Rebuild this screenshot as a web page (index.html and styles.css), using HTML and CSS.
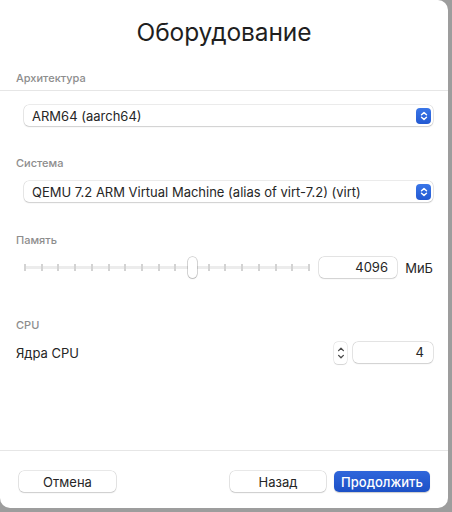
FILE: index.html
```html
<!DOCTYPE html>
<html lang="ru">
<head>
<meta charset="utf-8">
<title>Оборудование</title>
<link rel="stylesheet" href="styles.css">
</head>
<body>
<div class="sheet">
  <h1 class="title">Оборудование</h1>

  <div class="label label-arch">Архитектура</div>
  <div class="rule"></div>
  <div class="popup popup-arch">
    <span class="popup-text">ARM64 (aarch64)</span>
    <span class="popup-btn">
      <svg width="8" height="10" viewBox="0 0 8 10"><path d="M1.5 3.8 L4 1.6 L6.5 3.8 M1.5 6.2 L4 8.4 L6.5 6.2" fill="none" stroke="#fff" stroke-width="1.4" stroke-linecap="round" stroke-linejoin="round"/></svg>
    </span>
  </div>

  <div class="label label-sys">Система</div>
  <div class="popup popup-sys">
    <span class="popup-text">QEMU 7.2 ARM Virtual Machine (alias of virt-7.2) (virt)</span>
    <span class="popup-btn">
      <svg width="8" height="10" viewBox="0 0 8 10"><path d="M1.5 3.8 L4 1.6 L6.5 3.8 M1.5 6.2 L4 8.4 L6.5 6.2" fill="none" stroke="#fff" stroke-width="1.4" stroke-linecap="round" stroke-linejoin="round"/></svg>
    </span>
  </div>

  <div class="label label-mem">Память</div>
  <div class="mem-row">
    <div class="slider">
      <div class="track"></div>
      <div class="ticks">
        <i></i><i></i><i></i><i></i><i></i><i></i><i></i><i></i><i></i>
        <i></i><i></i><i></i><i></i><i></i><i></i><i></i><i></i><i></i>
      </div>
      <div class="thumb" style="left: 58.8%"></div>
    </div>
    <div class="field field-mem">4096</div>
    <span class="unit">МиБ</span>
  </div>

  <div class="label label-cpu">CPU</div>
  <div class="cpu-row">
    <span class="row-text">Ядра CPU</span>
    <span class="stepper">
      <svg width="8" height="16" viewBox="0 0 8 16"><path d="M1.6 5.6 L4 3.2 L6.4 5.6 M1.6 10.4 L4 12.8 L6.4 10.4" fill="none" stroke="#4a4a4a" stroke-width="1.3" stroke-linecap="round" stroke-linejoin="round"/></svg>
    </span>
    <div class="field field-cpu">4</div>
  </div>

  <div class="spacer"></div>

  <div class="footer">
    <button class="btn">Отмена</button>
    <div class="footer-right">
      <button class="btn">Назад</button>
      <button class="btn btn-primary">Продолжить</button>
    </div>
  </div>
</div>
</body>
</html>
```

FILE: styles.css
```css
* { box-sizing: border-box; }

html, body {
  margin: 0;
  padding: 0;
}

body {
  width: 452px;
  height: 512px;
  background: #9d9d9d;
  font-family: "Inter", "Liberation Sans", sans-serif;
  color: #262626;
  overflow: hidden;
}

.sheet {
  width: 448px;
  height: 508px;
  background: #ffffff;
  border-radius: 0 10px 10px 10px;
  display: flex;
  flex-direction: column;
}

.title {
  margin: 14px 0 0 0;
  height: 36px;
  line-height: 36px;
  font-size: 24.5px;
  font-weight: 400;
  text-align: center;
  color: #1f1f1f;
  letter-spacing: -0.1px;
}

.label {
  height: 14px;
  line-height: 14px;
  font-size: 11px;
  font-weight: 500;
  color: #8d8d8d;
  padding-left: 16px;
}

.label-arch { margin-top: 21px; }
.label-sys { margin-top: 30px; }
.label-mem { margin-top: 31px; }
.label-cpu { margin-top: 40px; }

.rule {
  margin-top: 5px;
  height: 1px;
  background: #e6e6e6;
}

.popup {
  margin-left: 24px;
  margin-right: 15px;
  height: 21px;
  border-radius: 5px;
  background: #fff;
  box-shadow: 0 0 0 0.5px rgba(0,0,0,0.16), 0 1px 1.5px rgba(0,0,0,0.12);
  display: flex;
  align-items: center;
  padding: 0 2px 0 8px;
  font-size: 13px;
}

.popup-arch { margin-top: 14px; }
.popup-sys { margin-top: 11px; }

.popup-text {
  flex: 1;
  white-space: nowrap;
}

.popup-btn {
  width: 15px;
  height: 16px;
  border-radius: 4px;
  background: linear-gradient(#3a76e8, #2359d2);
  display: flex;
  align-items: center;
  justify-content: center;
}

.mem-row {
  margin-top: 10px;
  height: 21px;
  display: flex;
  align-items: center;
  padding: 0 15px 0 24px;
}

.slider {
  position: relative;
  flex: 0 0 286px;
  height: 21px;
  display: flex;
  align-items: center;
}

.track {
  position: absolute;
  left: 0;
  right: 0;
  top: 9px;
  height: 3px;
  border-radius: 2px;
  background: #ececec;
}

.ticks {
  position: relative;
  width: 100%;
  display: flex;
  justify-content: space-between;
}

.ticks i {
  display: block;
  width: 2px;
  height: 7px;
  background: #d3d3d3;
}

.thumb {
  position: absolute;
  top: 0;
  width: 9px;
  height: 21px;
  margin-left: -4px;
  border-radius: 5px;
  background: #fff;
  box-shadow: 0 0 0 0.7px rgba(0,0,0,0.22), 0 1px 1.5px rgba(0,0,0,0.12);
}

.field {
  height: 21px;
  line-height: 21px;
  border-radius: 5px;
  background: #fff;
  box-shadow: 0 0 0 0.5px rgba(0,0,0,0.18), 0 0.5px 1.5px rgba(0,0,0,0.10);
  font-size: 13px;
  text-align: right;
  padding-right: 9px;
}

.field-mem {
  margin-left: 9px;
  width: 78px;
}

.unit {
  margin-left: auto;
  font-size: 13px;
}

.cpu-row {
  margin-top: 10px;
  height: 21px;
  display: flex;
  align-items: center;
  padding: 0 15px 0 16px;
  font-size: 13px;
}

.row-text { flex: 1; }

.stepper {
  width: 13px;
  height: 22px;
  border-radius: 4px;
  background: #fff;
  box-shadow: 0 0 0 0.5px rgba(0,0,0,0.14), 0 0.5px 1px rgba(0,0,0,0.10);
  display: flex;
  align-items: center;
  justify-content: center;
}

.field-cpu {
  margin-left: 6px;
  width: 80px;
}

.spacer { flex: 1; }

.footer {
  border-top: 1px solid #e6e6e6;
  padding: 20px 18px 16px 19px;
  display: flex;
  justify-content: space-between;
}

.footer-right {
  display: flex;
  gap: 8px;
}

.btn {
  width: 97px;
  height: 21px;
  border: none;
  border-radius: 5px;
  background: #fff;
  box-shadow: 0 0 0 0.5px rgba(0,0,0,0.18), 0 1px 1.5px rgba(0,0,0,0.12);
  font-family: inherit;
  font-size: 13px;
  color: #262626;
  padding: 0;
}

.footer-right .btn { width: 96px; }

.btn-primary {
  background: linear-gradient(#2f66db, #1c50c6);
  color: #fff;
  font-weight: 500;
  box-shadow: 0 0.5px 1px rgba(0,0,0,0.2);
}
```
